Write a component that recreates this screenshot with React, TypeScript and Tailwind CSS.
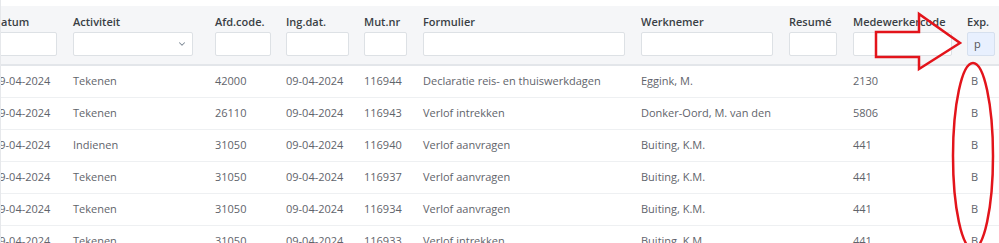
import { ChevronDown } from "lucide-react";

const columns = [
    { label: "Datum", width: "w-[80px]", input: "w-[64px]" },
    { label: "Activiteit", width: "w-[142px]", input: "w-[120px]", select: true },
    { label: "Afd.code.", width: "w-[71px]", input: "w-[56px]" },
    { label: "Ing.dat.", width: "w-[78px]", input: "w-[63px]" },
    { label: "Mut.nr", width: "w-[59px]", input: "w-[43px]" },
    { label: "Formulier", width: "w-[218px]", input: "w-[202px]" },
    { label: "Werknemer", width: "w-[148px]", input: "w-[132px]" },
    { label: "Resumé", width: "w-[64px]", input: "w-[48px]" },
    { label: "Medewerkercode", width: "w-[114px]", input: "w-[99px]" },
    { label: "Exp.", width: "w-[40px]", input: "w-[28px]", value: "p" },
];

const rows = [
    ["09-04-2024", "Tekenen", "42000", "09-04-2024", "116944", "Declaratie reis- en thuiswerkdagen", "Eggink, M.", "", "2130", "B"],
    ["09-04-2024", "Tekenen", "26110", "09-04-2024", "116943", "Verlof intrekken", "Donker-Oord, M. van den", "", "5806", "B"],
    ["09-04-2024", "Indienen", "31050", "09-04-2024", "116940", "Verlof aanvragen", "Buiting, K.M.", "", "441", "B"],
    ["09-04-2024", "Tekenen", "31050", "09-04-2024", "116937", "Verlof aanvragen", "Buiting, K.M.", "", "441", "B"],
    ["09-04-2024", "Tekenen", "31050", "09-04-2024", "116934", "Verlof aanvragen", "Buiting, K.M.", "", "441", "B"],
    ["09-04-2024", "Tekenen", "31050", "09-04-2024", "116933", "Verlof intrekken", "Buiting, K.M.", "", "441", "B"],
];

export default function App() {
    return (
        <div
            className="relative w-[999px] h-[243px] overflow-hidden bg-white border-l border-[#e6e8eb]"
            style={{ fontFamily: '"Open Sans", "Noto Sans", sans-serif' }}
        >
            <div className="pt-[6px] ml-[-8px] w-[1020px]">
                {/* filter header */}
                <div className="flex bg-[#f5f6f8] pt-[8px] pb-[8px] border-b-2 border-[#e3e6ea]">
                    {columns.map((col) => (
                        <div key={col.label} className={`${col.width} shrink-0 flex flex-col gap-[2px]`}>
                            <div className="h-[16px] leading-[16px] text-[11px] font-semibold text-[#3a3f45] whitespace-nowrap">
                                {col.label}
                            </div>
                            {col.select ? (
                                <div className={`${col.input} h-[24px] bg-white border border-[#dde1e5] rounded-[2px] flex items-center justify-end pr-[5px]`}>
                                    <ChevronDown size={10} strokeWidth={2.5} className="text-[#7b8794]" />
                                </div>
                            ) : col.value ? (
                                <div className={`${col.input} h-[24px] bg-[#e8f0fe] border border-[#d6e0ee] rounded-[2px] flex items-center pl-[6px] text-[11px] text-[#555]`}>
                                    {col.value}
                                </div>
                            ) : (
                                <div className={`${col.input} h-[24px] bg-white border border-[#dde1e5] rounded-[2px]`} />
                            )}
                        </div>
                    ))}
                </div>

                {/* rows */}
                {rows.map((row, i) => (
                    <div key={i} className="flex h-[32px] items-center border-b border-[#eef0f2]">
                        {row.map((cell, j) => (
                            <div
                                key={j}
                                className={`${columns[j].width} shrink-0 text-[11px] text-[#5f646b] whitespace-nowrap ${j === 9 ? "pl-[4px]" : ""}`}
                            >
                                {cell}
                            </div>
                        ))}
                    </div>
                ))}
            </div>

            {/* red annotations */}
            <svg className="absolute inset-0 pointer-events-none" width="999" height="243" viewBox="0 0 999 243">
                <polygon
                    points="875,32 918,32 918,14 959,43 918,69 918,57 875,57"
                    fill="none"
                    stroke="#e3141b"
                    strokeWidth="2.5"
                    strokeLinejoin="miter"
                />
                <ellipse cx="972" cy="156" rx="20" ry="93" fill="none" stroke="#e3141b" strokeWidth="2.5" />
            </svg>
        </div>
    );
}
